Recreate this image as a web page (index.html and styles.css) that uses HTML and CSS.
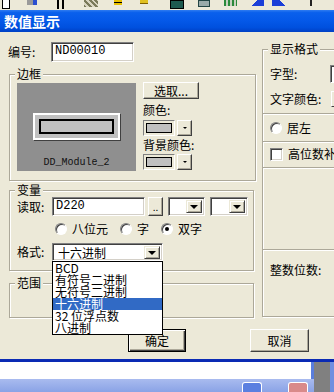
FILE: index.html
```html
<!DOCTYPE html>
<html lang="zh-CN">
<head>
<meta charset="utf-8">
<title>数值显示</title>
<link rel="stylesheet" href="styles.css">
</head>
<body>
<div class="screen">
  <div class="toolbar">
    <span class="ti t1"></span><span class="ti t2"></span><span class="ti t3"></span><span class="ti t4"></span>
    <span class="ti t5"></span><span class="ti t6"></span><span class="ti t7"></span><span class="ti t8"></span>
    <span class="ti t9"></span><span class="ti t10"></span><span class="ti t11"></span><span class="ti t12"></span>
  </div>
  <div class="window">
    <div class="titlebar">数值显示</div>
    <div class="dlg">
      <div class="cols">
        <div class="left">
          <div class="idrow">
            <span class="lbl-id">编号:</span>
            <div class="field w-id">ND00010</div>
          </div>

          <div class="group g-border">
            <div class="gtitle">边框</div>
            <div class="bbody">
              <div class="preview">
                <div class="bezel"><div class="bezel-inner"></div></div>
                <div class="pname">DD_Module_2</div>
              </div>
              <div class="side">
                <div class="btn btn-pick">选取...</div>
                <div class="slbl">颜色:</div>
                <div class="cpick"><span class="swatch-wrap"><span class="swatch"></span></span><span class="cbtn"><span class="mini-arrow"></span></span></div>
                <div class="slbl slbl2">背景颜色:</div>
                <div class="cpick cpick2"><span class="swatch-wrap"><span class="swatch"></span></span><span class="cbtn"><span class="mini-arrow"></span></span></div>
              </div>
            </div>
          </div>

          <div class="group g-var">
            <div class="gtitle">变量</div>
            <div class="vrow">
              <span class="vlbl">读取:</span>
              <div class="field w-read">D220</div>
              <div class="btn btn-dots">..</div>
              <div class="combo w-c1"><span class="combo-text"></span><span class="cbtn2"><span class="arrow"></span></span></div>
              <div class="combo w-c2"><span class="combo-text"></span><span class="cbtn2"><span class="arrow"></span></span></div>
            </div>
            <div class="rrow">
              <span class="ropt"><span class="radio"></span>八位元</span>
              <span class="ropt"><span class="radio"></span>字</span>
              <span class="ropt"><span class="radio on"></span>双字</span>
            </div>
            <div class="frow">
              <span class="vlbl">格式:</span>
              <div class="combo w-fmt">
                <span class="combo-text">十六进制</span><span class="cbtn2"><span class="arrow"></span></span>
                <ul class="dlist">
                  <li>BCD</li>
                  <li>有符号二进制</li>
                  <li>无符号二进制</li>
                  <li class="sel">十六进制</li>
                  <li>32 位浮点数</li>
                  <li>八进制</li>
                </ul>
              </div>
            </div>
          </div>

          <div class="group g-range">
            <div class="gtitle">范围</div>
          </div>
        </div>

        <div class="right">
          <div class="group g-fmt">
            <div class="gtitle">显示格式</div>
            <div class="frow2 r-font"><span class="flbl">字型:</span><span class="fbox"></span></div>
            <div class="frow2 r-color"><span class="flbl">文字颜色:</span><span class="fbtn"></span></div>
            <div class="sep"></div>
            <div class="frow2 r-align">
              <span class="ropt"><span class="radio"></span>居左</span>
              <span class="ropt"><span class="radio on"></span>居中</span>
            </div>
            <div class="sep"></div>
            <div class="frow2 r-check"><span class="ropt"><span class="check"></span>高位数补零</span></div>
            <div class="sep"></div>
            <div class="spacer"></div>
            <div class="sep"></div>
            <div class="frow2 r-int"><span class="flbl">整数位数:</span></div>
          </div>
        </div>
      </div>
      <div class="buttons">
        <div class="btn btn-ok">确定</div>
        <div class="btn btn-cancel">取消</div>
      </div>
    </div>
    <div class="frame-bottom"></div>
  </div>
  <div class="below">
    <div class="below-main">
      <div class="white-strip"></div>
      <div class="inactive-bar">
        <span class="ib ib-blue"></span>
        <span class="ib ib-red"></span>
      </div>
    </div>
    <div class="edge-gray"></div>
    <div class="edge-blue"></div>
  </div>
</div>
</body>
</html>
```

FILE: styles.css
```css
* { box-sizing: border-box; }
html, body { margin: 0; padding: 0; }
body {
  width: 334px;
  height: 392px;
  overflow: hidden;
  background: #ECE9D8;
  font-family: "Noto Sans CJK SC", "Noto Sans", "DejaVu Sans", sans-serif;
  font-size: 12px;
  line-height: 14px;
  color: #000;
}
.screen { width: 334px; height: 392px; overflow: hidden; display: flex; flex-direction: column; }

/* toolbar fragments */
.toolbar { height: 10px; background: #ECE9D8; display: flex; align-items: flex-start; flex: none; }
.ti { display: block; height: 9px; flex: none; }
.t1 { width: 8px; margin-left: 2px; background: #fff; border-left: 1px solid #000; border-right: 1px solid #000; border-bottom: 1px solid #000; }
.t2 { width: 10px; margin-left: 17px; background: linear-gradient(90deg, #9a9a9a 60%, #2b4fd0 60%); height: 5px; }
.t3 { width: 7px; margin-left: 20px; background: linear-gradient(90deg, #000 0 2px, transparent 2px 5px, #000 5px); }
.t4 { width: 14px; margin-left: 20px; background: repeating-linear-gradient(45deg, #7a7a5a 0 2px, #d8d4c0 2px 4px); height: 7px; }
.t5 { width: 8px; margin-left: 16px; background: linear-gradient(#e8c000 50%, #000 50% 65%, #e8c000 65%); height: 5px; }
.t6 { width: 8px; margin-left: 18px; background: #e0c020; height: 4px; border-bottom: 1px solid #806000; }
.t7 { width: 14px; margin-left: 22px; background: #1d5a50; border: 1px solid #000; }
.t8 { width: 12px; margin-left: 14px; background: #9aa; border: 1px solid #244; height: 7px; }
.t9 { width: 13px; margin-left: 14px; background: repeating-linear-gradient(90deg, #2a8a3a 0 2px, #c8d0c0 2px 4px); height: 6px; }
.t10 { width: 17px; margin-left: 10px; background: linear-gradient(135deg, transparent 45%, #1a3ed8 45%); height: 6px; }
.t11 { width: 18px; margin-left: 8px; background: linear-gradient(225deg, transparent 45%, #1a3ed8 45%); height: 6px; }
.t12 { width: 2px; margin-left: 20px; background: #222; height: 6px; }

/* window */
.window { flex: none; display: flex; flex-direction: column; }
.titlebar {
  height: 22px;
  padding-left: 4px;
  color: #fff;
  font-weight: bold;
  font-size: 14px;
  line-height: 22px;
  background: linear-gradient(#2f7cf0 0%, #0a60ec 12%, #0458e8 50%, #0050de 80%, #0040c4 100%);
}
.dlg { height: 327px; background: #ECE9D8; display: flex; flex-direction: column; }
.frame-bottom { height: 3px; background: #0a2ab4; }

.cols { display: flex; }
.left { width: 256px; flex: none; padding-left: 9px; padding-top: 10px; }
.right { flex: 1; min-width: 0; overflow: hidden; padding-left: 6px; padding-top: 17px; }

/* classic fields */
.field {
  height: 20px;
  background: #fff;
  border: 1px solid;
  border-color: #808080 #fff #fff #808080;
  box-shadow: inset 1px 1px 0 #404040, inset -1px -1px 0 #D4D0C8;
  padding: 0 3px;
  line-height: 17px;
  font-family: "Liberation Mono", "DejaVu Sans Mono", monospace;
  font-size: 12px;
}
.btn {
  background: #ECE9D8;
  border: 1px solid;
  border-color: #fff #404040 #404040 #fff;
  box-shadow: inset -1px -1px 0 #ACA899;
  display: flex;
  align-items: center;
  justify-content: center;
}

.idrow { display: flex; align-items: center; height: 20px; margin-left: -1px; }
.lbl-id { width: 43px; }
.w-id { width: 83px; }

/* group boxes */
.group {
  border: 1px solid #ACA899;
  box-shadow: inset 1px 1px 0 #fff, 1px 1px 0 #fff;
}
.gtitle {
  margin: -8px 0 0 5px;
  padding: 0 2px;
  width: max-content;
  height: 14px;
  line-height: 14px;
  background: #ECE9D8;
}

.g-border { margin-top: 12px; width: 247px; height: 107px; }
.bbody { display: flex; margin-top: 1px; }
.preview {
  margin: 1px 0 0 7px;
  width: 119px;
  height: 88px;
  background: #8f8f8f;
  display: flex;
  flex-direction: column;
  align-items: center;
}
.bezel {
  margin-top: 30px;
  width: 87px;
  height: 27px;
  border: 2px solid #fff;
  background: #C0C0C0;
  box-shadow: 1px 1px 0 #404040;
  padding: 4px;
}
.bezel-inner { width: 100%; height: 100%; border: 2px solid #000; background: #C0C0C0; }
.pname {
  margin-top: 17px;
  line-height: 12px;
  font-family: "Liberation Mono", "DejaVu Sans Mono", monospace;
  font-size: 10px;
  color: #111;
}
.side { margin-left: 7px; width: 56px; display: flex; flex-direction: column; }
.btn-pick { height: 17px; }
.slbl { margin-top: 4px; height: 14px; }
.slbl2 { margin-top: 2px; }
.cpick {
  margin-top: 3px;
  width: 49px;
  height: 16px;
  display: flex;
  align-items: stretch;
}
.cpick2 { margin-top: 2px; }
.swatch-wrap {
  width: 32px;
  border: 1px solid;
  border-color: #808080 #fff #fff #808080;
  padding: 2px;
  display: flex;
}
.swatch { flex: 1; border: 1px solid #000; background: #C0C0C0; }
.cbtn {
  margin-left: 2px;
  width: 15px;
  background: #ECE9D8;
  border: 1px solid;
  border-color: #fff #404040 #404040 #fff;
  box-shadow: inset -1px -1px 0 #ACA899;
  display: flex;
  align-items: center;
  justify-content: center;
}
.mini-arrow { width: 0; height: 0; border-left: 2px solid transparent; border-right: 2px solid transparent; border-top: 2px solid #000; }

.g-var { margin-top: 9px; width: 245px; height: 81px; }
.vrow { display: flex; align-items: center; height: 19px; padding-left: 7px; }
.vlbl { width: 35px; flex: none; }
.w-read { width: 93px; height: 19px; line-height: 16px; }
.btn-dots { margin-left: 3px; width: 15px; height: 19px; font-size: 10px; line-height: 10px; align-items: flex-end; padding-bottom: 3px; }
.combo {
  height: 19px;
  background: #fff;
  border: 1px solid;
  border-color: #808080 #fff #fff #808080;
  box-shadow: inset 1px 1px 0 #404040, inset -1px -1px 0 #D4D0C8;
  display: flex;
  padding: 2px;
  position: relative;
}
.combo-text { flex: 1; padding-left: 2px; line-height: 13px; }
.cbtn2 {
  width: 16px;
  background: #ECE9D8;
  border: 1px solid;
  border-color: #ECE9D8 #404040 #404040 #ECE9D8;
  box-shadow: inset 1px 1px 0 #fff, inset -1px -1px 0 #ACA899;
  display: flex;
  align-items: center;
  justify-content: center;
}
.arrow { width: 0; height: 0; border-left: 4px solid transparent; border-right: 4px solid transparent; border-top: 4px solid #000; }
.w-c1 { margin-left: 5px; width: 37px; }
.w-c2 { margin-left: 5px; width: 38px; }

.rrow { display: flex; align-items: center; gap: 12px; height: 18px; margin-top: 4px; padding-left: 45px; }
.ropt { display: flex; align-items: center; gap: 5px; white-space: nowrap; }
.radio {
  width: 12px;
  height: 12px;
  border-radius: 50%;
  background: #fff;
  border: 1px solid;
  border-color: #808080 #fff #fff #808080;
  box-shadow: inset 1px 1px 0 #404040;
  display: flex;
  align-items: center;
  justify-content: center;
  flex: none;
}
.radio.on::after { content: ""; width: 4px; height: 4px; border-radius: 50%; background: #000; }
.check {
  width: 13px;
  height: 13px;
  background: #fff;
  border: 1px solid;
  border-color: #808080 #fff #fff #808080;
  box-shadow: inset 1px 1px 0 #404040, inset -1px -1px 0 #D4D0C8;
  flex: none;
}

.frow { display: flex; align-items: center; height: 18px; margin-top: 5px; padding-left: 7px; }
.w-fmt { width: 111px; height: 18px; padding: 2px 2px 1px 2px; }
.w-fmt .combo-text { line-height: 13px; padding-left: 3px; }
.dlist {
  position: absolute;
  left: -1px;
  top: 17px;
  z-index: 5;
  width: 111px;
  margin: 0;
  padding: 0;
  list-style: none;
  background: #fff;
  border: 1px solid #000;
}
.dlist li { height: 12px; line-height: 12px; padding-left: 2px; white-space: nowrap; }
.dlist li.sel { background: #316AC5; color: #fff; }

.g-range { margin-top: 12px; width: 245px; height: 35px; }

/* right group */
.g-fmt { width: 110px; height: 268px; }
.frow2 { display: flex; align-items: center; padding-left: 7px; }
.flbl { width: 60px; flex: none; white-space: nowrap; }
.r-font { height: 20px; margin-top: 8px; }
.r-color { height: 20px; margin-top: 5px; }
.fbox {
  width: 40px;
  height: 18px;
  background: #fff;
  border: 1px solid;
  border-color: #808080 #fff #fff #808080;
  box-shadow: inset 1px 1px 0 #404040;
}
.fbtn {
  width: 40px;
  height: 16px;
  margin-left: 1px;
  border: 1px solid;
  border-color: #fff #404040 #404040 #fff;
}
.sep { height: 2px; border-top: 1px solid #ACA899; border-bottom: 1px solid #fff; }
.r-color + .sep { margin-top: 4px; }
.r-align { height: 26px; gap: 34px; }
.r-check { height: 24px; align-items: flex-start; padding-top: 4px; }
.spacer { height: 80px; }
.r-int { height: 38px; }

/* buttons */
.buttons { display: flex; padding-left: 128px; gap: 64px; margin-top: 11px; }
.btn-ok { width: 58px; height: 23px; border: 1px solid #000; box-shadow: inset 1px 1px 0 #fff, inset -1px -1px 0 #404040, inset -2px -2px 0 #ACA899; }
.btn-cancel { width: 59px; height: 23px; }

/* area below the dialog */
.below { flex: 1; display: flex; }
.below-main { width: 314px; display: flex; flex-direction: column; }
.white-strip { height: 17px; background: #fff; border-right: 3px solid #5a7edc; }
.inactive-bar { flex: 1; background: linear-gradient(#a9bbef, #8aa3e6); display: flex; align-items: flex-end; }
.ib { height: 10px; border-radius: 3px 3px 0 0; }
.ib-blue { width: 20px; margin-left: 242px; background: #5b7fe0; border: 1px solid #fff; border-bottom: none; }
.ib-red { width: 20px; margin-left: 26px; background: #d98a8a; border: 1px solid #fff; border-bottom: none; }
.edge-gray { width: 16px; background: #808080; }
.edge-blue { width: 4px; background: #6f8fe0; }
```
